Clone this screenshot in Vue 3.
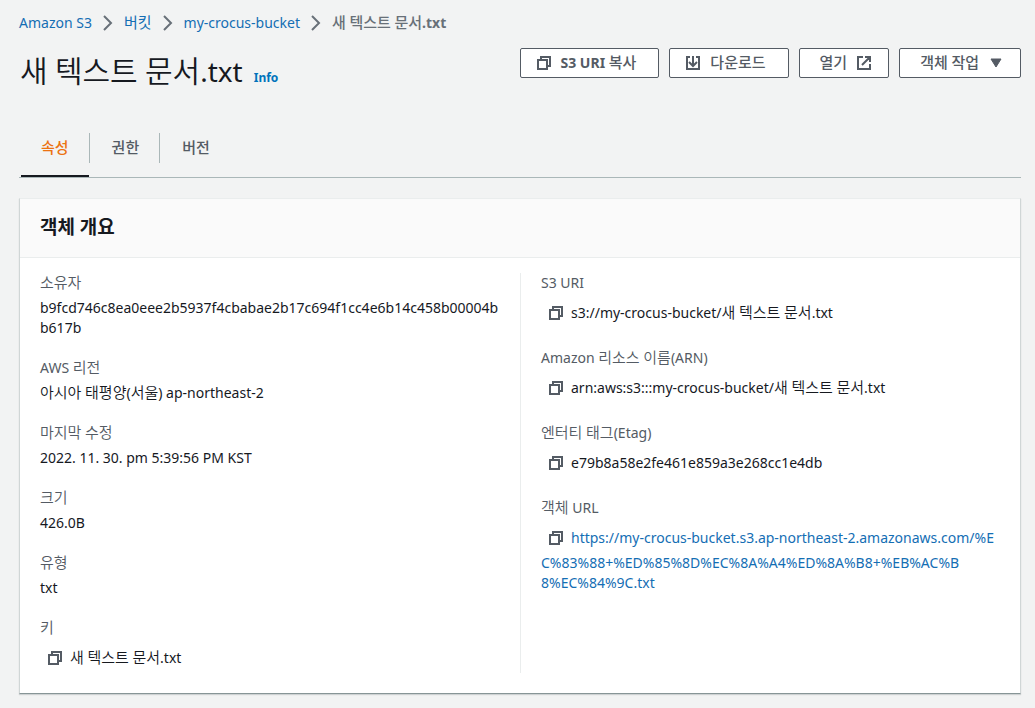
<script setup>
import { h } from 'vue'

// Splits mixed text so that Hangul runs can carry their own size.
const Mixed = (props) =>
  props.text
    .split(/([\uac00-\ud7a3]+)/)
    .filter(Boolean)
    .map((run) => (/[\uac00-\ud7a3]/.test(run) ? h('span', { class: 'ko', lang: 'ko' }, run) : run))
Mixed.props = ['text']

const CopyIcon = () =>
  h('svg', { class: 'icon', viewBox: '0 0 16 16', 'aria-hidden': 'true' }, [
    h('path', { d: 'M2 5h9v9H2zM5 5V2h9v9h-3' }),
  ])

const fileName = '새 텍스트 문서.txt'
const crumbs = ['Amazon S3', '버킷', 'my-crocus-bucket']
const tabs = ['속성', '권한', '버전']
const columns = [
  [
    { label: '소유자', value: 'b9fcd746c8ea0eee2b5937f4cbabae2b17c694f1cc4e6b14c458b00004bb617b' },
    { label: 'AWS 리전', value: '아시아 태평양(서울) ap-northeast-2' },
    { label: '마지막 수정', value: '2022. 11. 30. pm 5:39:56 PM KST' },
    { label: '크기', value: '426.0B' },
    { label: '유형', value: 'txt' },
    { label: '키', value: fileName, copy: true },
  ],
  [
    { label: 'S3 URI', value: 's3://my-crocus-bucket/' + fileName, copy: true },
    { label: 'Amazon 리소스 이름(ARN)', value: 'arn:aws:s3:::my-crocus-bucket/' + fileName, copy: true },
    { label: '엔터티 태그(Etag)', value: 'e79b8a58e2fe461e859a3e268cc1e4db', copy: true },
    {
      label: '객체 URL',
      value:
        'https://my-crocus-bucket.s3.ap-northeast-2.amazonaws.com/%EC%83%88+%ED%85%8D%EC%8A%A4%ED%8A%B8+%EB%AC%B\n8%EC%84%9C.txt',
      copy: true,
      link: true,
    },
  ],
]
</script>

<template>
  <main class="page">
    <nav class="crumbs" aria-label="breadcrumb">
      <template v-for="c in crumbs" :key="c">
        <a href="#"><Mixed :text="c" /></a>
        <svg class="chevron" viewBox="0 0 10 16" aria-hidden="true"><path d="M1 1l7 7-7 7" /></svg>
      </template>
      <span class="current"><Mixed :text="fileName" /></span>
    </nav>

    <header class="head">
      <div class="title">
        <h1><Mixed :text="fileName" /></h1>
        <a href="#" class="info">Info</a>
      </div>
      <div class="actions">
        <button type="button" class="btn lead"><CopyIcon /><span><Mixed text="S3 URI 복사" /></span></button>
        <button type="button" class="btn lead">
          <svg class="icon" viewBox="0 0 16 16" aria-hidden="true">
            <path d="M5 2H2v12h12V2h-3M8 1v9M4 7l4 4 4-4" />
          </svg>
          <span><Mixed text="다운로드" /></span>
        </button>
        <button type="button" class="btn trail">
          <span><Mixed text="열기" /></span>
          <svg class="icon" viewBox="0 0 16 16" aria-hidden="true">
            <path d="M7 2H2v12h12V9M9 2h5v5M14 2L6 10" />
          </svg>
        </button>
        <button type="button" class="btn trail">
          <span><Mixed text="객체 작업" /></span>
          <svg class="icon solid" viewBox="0 0 16 16" aria-hidden="true"><path d="M3 4h10l-5 8z" /></svg>
        </button>
      </div>
    </header>

    <div class="tabs" role="tablist">
      <button
        v-for="(t, i) in tabs"
        :key="t"
        type="button"
        role="tab"
        class="tab"
        :class="{ active: i === 0 }"
        :aria-selected="i === 0"
      >
        <span class="tab-text"><Mixed :text="t" /></span>
      </button>
    </div>

    <section class="panel">
      <h2><Mixed text="객체 개요" /></h2>
      <div class="columns">
        <dl v-for="(col, ci) in columns" :key="ci" class="column">
          <div v-for="f in col" :key="f.label" class="field">
            <dt><Mixed :text="f.label" /></dt>
            <dd>
              <button v-if="f.copy" type="button" class="copy" :aria-label="f.label + ' 복사'"><CopyIcon /></button>
              <a v-if="f.link" href="#" class="url">{{ f.value }}</a>
              <Mixed v-else :text="f.value" />
            </dd>
          </div>
        </dl>
      </div>
    </section>
  </main>
</template>

<style>
body {
  background: #f2f3f3;
}
</style>

<style scoped>
.page {
  padding: 13px 14px 14px 19px;
  font: 14px/20px "Noto Sans", "Noto Sans CJK KR", sans-serif;
  color: #16191f;
}
.page :deep(.ko) {
  font-family: "Noto Sans CJK KR", sans-serif;
  font-size: 15px;
  line-height: 1;
}
a {
  color: #146eb4;
  text-decoration: none;
}
.crumbs {
  display: flex;
  align-items: center;
  gap: 11px;
}
.crumbs .current {
  color: #687078;
  font-weight: 700;
}
.crumbs .current :deep(.ko) {
  font-weight: 500;
}
.chevron {
  width: 10px;
  height: 16px;
  fill: none;
  stroke: #687078;
  stroke-width: 2;
}
.head {
  display: flex;
  justify-content: space-between;
  align-items: flex-start;
  padding-top: 15px;
}
.title {
  display: flex;
  align-items: baseline;
  gap: 11px;
  padding-left: 1px;
}
h1 {
  margin: 0;
  font-size: 28px;
  line-height: 46px;
  font-weight: 400;
}
.page h1 :deep(.ko) {
  font-size: 30px;
  font-weight: 350;
}
.info {
  color: #0073bb;
  font-size: 12px;
  font-weight: 700;
}
.actions {
  display: flex;
  gap: 10px;
}
.btn {
  display: flex;
  align-items: center;
  gap: 9px;
  height: 30px;
  margin: 0;
  border: 1px solid #545b64;
  border-radius: 2px;
  background: #fff;
  color: #545b64;
  font: inherit;
  font-weight: 700;
}
.lead {
  padding: 0 22px 0 15px;
}
.trail {
  padding: 0 16px 0 20px;
}
.btn :deep(.ko) {
  font-weight: 500;
}
.page :deep(.icon) {
  width: 16px;
  height: 16px;
  flex: none;
  fill: none;
  stroke: #545b64;
  stroke-width: 2;
}
.page :deep(.icon.solid) {
  fill: #545b64;
  stroke-width: 1;
}
.tabs {
  display: flex;
  margin-top: 39px;
  padding-left: 2px;
  border-bottom: 1px solid #aab7b8;
}
.tab {
  display: flex;
  padding: 0 0 12px;
  margin: 0;
  border: 0;
  border-bottom: 2px solid transparent;
  background: none;
  color: #545b64;
  font: inherit;
  font-weight: 500;
}
.tab-text {
  padding: 5px 20px;
  height: 20px;
}
.tab + .tab .tab-text {
  padding-left: 22px;
  border-left: 1px solid #aab7b8;
}
.tab.active {
  color: #ec7211;
  border-bottom-color: #16191f;
}
.panel {
  margin-top: 20px;
  background: #fff;
  border: 1px solid #d0d6d6;
  border-top-color: #eaeded;
  border-bottom-color: #879596;
  box-shadow: 0 1px 1px rgba(0, 28, 36, 0.15);
}
h2 {
  margin: 0;
  padding: 13px 20px 15px;
  background: #fafafa;
  border-bottom: 1px solid #eaeded;
  font-size: 18px;
  line-height: 30px;
  font-weight: 700;
}
.page h2 :deep(.ko) {
  font-size: 19px;
}
.columns {
  display: grid;
  grid-template-columns: 1fr 1fr;
  padding: 15px 0 20px;
}
.column {
  display: flex;
  flex-direction: column;
  gap: 20px;
  margin: 0;
  padding: 0 20px;
}
.column :deep(.ko) {
  font-weight: 350;
}
.column + .column {
  border-left: 1px solid #eaeded;
}
dt {
  color: #545b64;
}
dd {
  margin: 5px 0 0;
  word-break: break-all;
}
.url {
  white-space: pre-line;
}
.copy {
  display: inline-flex;
  align-items: center;
  vertical-align: -3px;
  height: 30px;
  padding: 0 7px;
  margin: 0;
  border: 0;
  background: none;
}
</style>
